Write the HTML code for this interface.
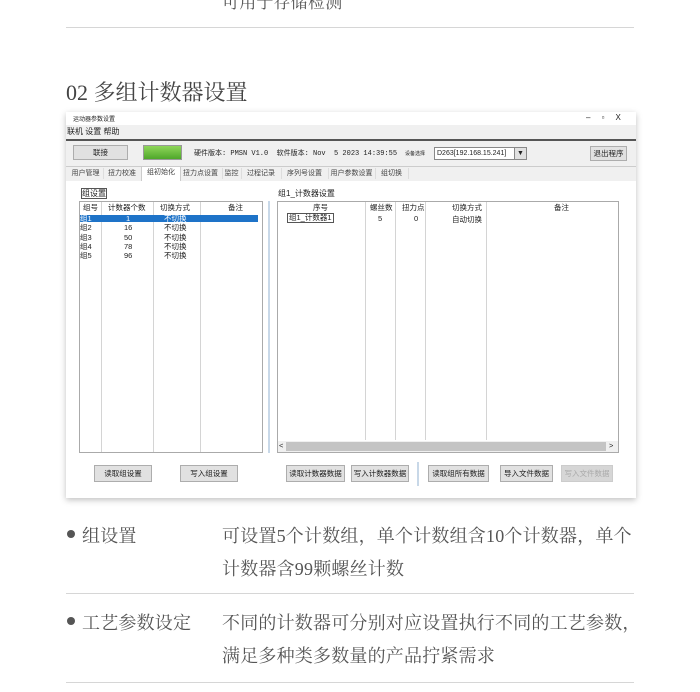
<!DOCTYPE html><html><head><meta charset="utf-8"><style>
body{margin:0;width:700px;height:692px;background:#fff;position:relative;overflow:hidden;font-family:"Liberation Serif","Noto Serif CJK SC",serif}
.a{position:absolute}
.s{font-family:"Liberation Sans","Noto Sans CJK SC",sans-serif;font-size:7.5px;color:#222;white-space:nowrap}
.b{position:absolute;background:#e1e1e1;border:1px solid #adadad;font-family:"Liberation Sans","Noto Sans CJK SC",sans-serif;font-size:7.5px;color:#222;display:flex;align-items:center;justify-content:center;box-sizing:border-box}
.t{position:absolute;color:#555;font-size:18px;white-space:nowrap;letter-spacing:0.2px}
.hl{position:absolute;left:66px;width:568px;height:1px;background:#d6d6d6}
.vl{position:absolute;width:1px;background:#d4d4d4}
.tab{position:absolute;top:168px;height:11px;font-size:7px;color:#444;border-right:1px solid #ddd;text-align:center;line-height:11px}
</style></head><body>
<div class="t" style="left:222px;top:-12px;font-size:17px">可用于存储检测</div>
<div class="hl" style="top:27px"></div>
<div class="a" style="left:66px;top:76px;font-size:22px;color:#444">02 多组计数器设置</div>

<div class="a" style="left:66px;top:112px;width:570px;height:386px;background:#fff;box-shadow:0 2px 6px rgba(0,0,0,.25)"></div>
<div class="a s" style="left:73px;top:114px;font-size:6px">运动器参数设置</div>
<div class="a s" style="left:586px;top:113px;font-size:8px">–&nbsp;&nbsp;&nbsp;&nbsp;&nbsp;▫&nbsp;&nbsp;&nbsp;&nbsp;&nbsp;X</div>
<div class="a" style="left:66px;top:125px;width:570px;height:14px;background:#f0f0f0"></div>
<div class="a s" style="left:67px;top:126px;font-size:8px">联机 设置 帮助</div>
<div class="a" style="left:66px;top:139px;width:570px;height:2px;background:#555"></div>
<div class="a" style="left:66px;top:141px;width:570px;height:25px;background:#f0f0f0"></div>
<div class="b" style="left:73px;top:145px;width:55px;height:15px">联接</div>
<div class="a" style="left:143px;top:145px;width:37px;height:13px;background:linear-gradient(#8fd65a,#4fa72a);border:1px solid #999"></div>
<div class="a s" style="left:194px;top:148px;font-family:'Liberation Mono','Noto Sans CJK SC',monospace;font-size:7px">硬件版本: PMSN V1.0&nbsp; 软件版本: Nov&nbsp; 5 2023 14:39:55</div>
<div class="a s" style="left:405px;top:150px;font-size:5px">设备选择</div>
<div class="a s" style="left:434px;top:147px;width:80px;height:11px;border:1px solid #888;background:#fff;font-size:7px;line-height:11px;padding-left:2px">D263[192.168.15.241]</div>
<div class="a s" style="left:514px;top:147px;width:11px;height:11px;border:1px solid #888;background:#e1e1e1;font-size:7px;text-align:center;line-height:11px">▼</div>
<div class="b" style="left:590px;top:146px;width:37px;height:15px">退出程序</div>
<div class="a" style="left:66px;top:166px;width:570px;height:14px;background:#f0f0f0;border-top:1px solid #ccc"></div>
<div class="a s" style="left:0;top:0">
<div class="tab" style="left:68px;width:35px">用户管理</div>
<div class="tab" style="left:103px;width:38px">扭力校准</div>
<div class="tab" style="left:141px;width:38px;background:#fff;top:166px;height:14px;border:1px solid #ccc;border-bottom:none">组初始化</div>
<div class="tab" style="left:179px;width:43px">扭力点设置</div>
<div class="tab" style="left:222px;width:19px">监控</div>
<div class="tab" style="left:241px;width:40px">过程记录</div>
<div class="tab" style="left:281px;width:47px">序列号设置</div>
<div class="tab" style="left:328px;width:47px">用户参数设置</div>
<div class="tab" style="left:375px;width:33px">组切换</div>
</div>
<div class="a s" style="left:81px;top:188px;font-size:8px;border:1px solid #555;line-height:9px">组设置</div>
<div class="a s" style="left:278px;top:188px;font-size:8px">组1_计数器设置</div>

<div class="a" style="left:79px;top:201px;width:184px;height:252px;border:1px solid #aaa;background:#fff;box-sizing:border-box"></div>
<div class="vl" style="left:101px;top:202px;height:250px"></div>
<div class="vl" style="left:153px;top:202px;height:250px"></div>
<div class="vl" style="left:200px;top:202px;height:250px"></div>
<div class="a" style="left:80px;top:215px;width:178px;height:7px;background:#1e73c8"></div>
<div class="a s" style="left:80px;top:203px;line-height:9px;font-size:7.5px">
<div style="position:absolute;left:3px;width:100px">组号</div><div style="position:absolute;left:28px">计数器个数</div><div style="position:absolute;left:80px">切换方式</div><div style="position:absolute;left:148px">备注</div></div>
<div class="a s" style="left:80px;top:214px;line-height:9.3px;font-size:7.5px;width:120px">
<div style="position:relative;color:#fff">组1<span style="position:absolute;left:46px">1</span><span style="position:absolute;left:84px">不切换</span></div>
<div style="position:relative">组2<span style="position:absolute;left:44px">16</span><span style="position:absolute;left:84px">不切换</span></div>
<div style="position:relative">组3<span style="position:absolute;left:44px">50</span><span style="position:absolute;left:84px">不切换</span></div>
<div style="position:relative">组4<span style="position:absolute;left:44px">78</span><span style="position:absolute;left:84px">不切换</span></div>
<div style="position:relative">组5<span style="position:absolute;left:44px">96</span><span style="position:absolute;left:84px">不切换</span></div></div>
<div class="a" style="left:268px;top:201px;width:2px;height:252px;background:#c8d8e8"></div>

<div class="a" style="left:277px;top:201px;width:342px;height:252px;border:1px solid #aaa;background:#fff;box-sizing:border-box"></div>
<div class="vl" style="left:365px;top:202px;height:238px"></div>
<div class="vl" style="left:395px;top:202px;height:238px"></div>
<div class="vl" style="left:425px;top:202px;height:238px"></div>
<div class="vl" style="left:486px;top:202px;height:238px"></div>
<div class="a s" style="left:278px;top:203px;width:335px;line-height:9px">
<span class="a" style="left:35px">序号</span><span class="a" style="left:92px">螺丝数</span><span class="a" style="left:124px">扭力点</span><span class="a" style="left:174px">切换方式</span><span class="a" style="left:276px">备注</span></div>
<div class="a s" style="left:287px;top:213px;border:1px solid #555;padding:0 1px;line-height:8px">组1_计数器1</div>
<div class="a s" style="left:378px;top:214px">5</div><div class="a s" style="left:414px;top:214px">0</div><div class="a s" style="left:452px;top:214px">自动切换</div>
<div class="a" style="left:278px;top:441px;width:340px;height:11px;background:#f0f0f0"></div>
<div class="a" style="left:286px;top:442px;width:320px;height:9px;background:#c4c4c4"></div>
<div class="a s" style="left:279px;top:441px">&lt;</div><div class="a s" style="left:609px;top:441px">&gt;</div>

<div class="b" style="left:94px;top:465px;width:58px;height:17px">读取组设置</div>
<div class="b" style="left:180px;top:465px;width:58px;height:17px">写入组设置</div>
<div class="b" style="left:286px;top:465px;width:59px;height:17px">读取计数器数据</div>
<div class="b" style="left:351px;top:465px;width:58px;height:17px">写入计数器数据</div>
<div class="a" style="left:417px;top:462px;width:2px;height:24px;background:#c8d8e8"></div>
<div class="b" style="left:428px;top:465px;width:61px;height:17px">读取组所有数据</div>
<div class="b" style="left:500px;top:465px;width:53px;height:17px">导入文件数据</div>
<div class="b" style="left:561px;top:465px;width:52px;height:17px;color:#aaa;background:#d6d6d6;border-color:#ccc">写入文件数据</div>

<div class="a" style="left:67px;top:530px;width:8px;height:8px;border-radius:50%;background:#555"></div>
<div class="t" style="left:82px;top:522px">组设置</div>
<div class="t" style="left:222px;top:522px">可设置5个计数组，单个计数组含10个计数器，单个</div>
<div class="t" style="left:222px;top:555px">计数器含99颗螺丝计数</div>
<div class="hl" style="top:593px"></div>
<div class="a" style="left:67px;top:617px;width:8px;height:8px;border-radius:50%;background:#555"></div>
<div class="t" style="left:82px;top:609px">工艺参数设定</div>
<div class="t" style="left:222px;top:609px">不同的计数器可分别对应设置执行不同的工艺参数，</div>
<div class="t" style="left:222px;top:642px">满足多种类多数量的产品拧紧需求</div>
<div class="hl" style="top:682px"></div>
</body></html>
